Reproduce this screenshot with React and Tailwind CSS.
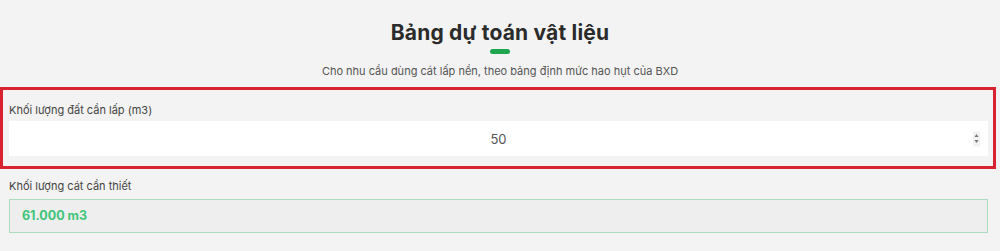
import { useState } from "react"

function formatVolume(n) {
  const [int, dec] = n.toFixed(3).split(".")
  return int.replace(/\B(?=(\d{3})+(?!\d))/g, ".") + "." + dec
}

export default function App() {
  const [volume, setVolume] = useState("50")
  const sand = (Number(volume) || 0) * 1.22

  const step = (d) => setVolume(String((Number(volume) || 0) + d))

  return (
    <div
      className="w-[1000px] min-h-[251px] bg-[#f3f3f3] text-[#333]"
      style={{ fontFamily: "Inter, 'Noto Sans', sans-serif" }}
    >
      <div className="flex flex-col items-center pt-[19px]">
        <h2 className="text-[21px] font-bold leading-[28px] text-[#2b2b2b] tracking-[0.2px]">
          Bảng dự toán vật liệu
        </h2>
        <span className="mt-[2px] h-[5px] w-[20px] rounded-full bg-[#1ea64f]" />
        <p className="mt-[9px] text-[11px] leading-[16px] text-[#555]">
          Cho nhu cầu dùng cát lấp nền, theo bảng định mức hao hụt của BXD
        </p>
      </div>

      <div className="mt-[8px] mr-[4px] border-[3px] border-[#d8232e] pl-[6px] pr-[5px] pt-[12px] pb-[10px]">
        <label className="block text-[11px] leading-[16px] text-[#444]">
          Khối lượng đất cần lấp (m3)
        </label>
        <div className="relative mt-[3px]">
          <input
            type="number"
            autoFocus
            value={volume}
            onChange={(e) => setVolume(e.target.value)}
            className="block h-[35px] w-full bg-white px-3 text-center text-[13px] text-[#555] outline-none caret-[#333] [appearance:textfield] [&::-webkit-inner-spin-button]:appearance-none [&::-webkit-outer-spin-button]:appearance-none"
          />
          <div className="absolute right-[8px] top-1/2 flex h-[15px] w-[7px] -translate-y-1/2 flex-col items-center justify-center gap-[2px] bg-[#f1f1f1]">
            <button type="button" onClick={() => step(1)} className="leading-none">
              <svg width="5" height="4" viewBox="0 0 5 4" className="block">
                <path d="M2.5 0.5L4.5 3.5H0.5Z" fill="#777" />
              </svg>
            </button>
            <button type="button" onClick={() => step(-1)} className="leading-none">
              <svg width="5" height="4" viewBox="0 0 5 4" className="block">
                <path d="M0.5 0.5H4.5L2.5 3.5Z" fill="#777" />
              </svg>
            </button>
          </div>
        </div>
      </div>

      <div className="pl-[9px] pr-[12px] pt-[9px]">
        <label className="block text-[11px] leading-[16px] text-[#444]">
          Khối lượng cát cần thiết
        </label>
        <div className="mt-[5px] flex h-[34px] items-center border border-[#a9dcc0] bg-[#eeeeee] px-[12px] text-[12.5px] font-bold text-[#3ec57a]">
          {formatVolume(sand)} m3
        </div>
      </div>
    </div>
  )
}
